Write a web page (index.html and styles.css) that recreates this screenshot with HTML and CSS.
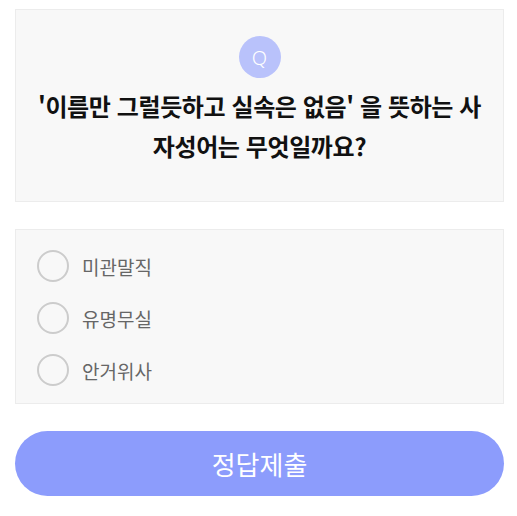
FILE: index.html
```html
<!DOCTYPE html>
<html lang="ko">
<head>
<meta charset="utf-8">
<link rel="stylesheet" href="styles.css">
</head>
<body>
<main class="quiz">
  <section class="question">
    <div class="q-badge">Q</div>
    <h1 class="q-text">'이름만 그럴듯하고 실속은 없음' 을 뜻하는 사<br>자성어는 무엇일까요?</h1>
  </section>
  <section class="options">
    <label class="option"><span class="radio"></span><span class="opt-text">미관말직</span></label>
    <label class="option"><span class="radio"></span><span class="opt-text">유명무실</span></label>
    <label class="option"><span class="radio"></span><span class="opt-text">안거위사</span></label>
  </section>
  <button class="submit">정답제출</button>
</main>
</body>
</html>
```

FILE: styles.css
```css
* { box-sizing: border-box; }
html, body { margin: 0; padding: 0; background: #fff; }
body {
  font-family: "Noto Sans CJK KR", "Noto Sans", sans-serif;
}
.quiz {
  width: 489px;
  margin: 9px 0 0 15px;
  display: flex;
  flex-direction: column;
}
.question {
  background: #f8f8f8;
  border: 1px solid #ececec;
  height: 193px;
  padding: 26px 5px 0;
  display: flex;
  flex-direction: column;
  align-items: center;
}
.q-badge {
  width: 42px;
  height: 42px;
  border-radius: 50%;
  background: #b9c2fb;
  color: #fff;
  font-family: "Noto Sans", sans-serif;
  font-size: 20px;
  font-weight: 300;
  display: flex;
  align-items: center;
  justify-content: center;
}
.q-text {
  margin: 8px 0 0;
  font-size: 24px;
  font-weight: 700;
  line-height: 40px;
  color: #111;
  text-align: center;
  letter-spacing: -0.4px;
}
.options {
  margin-top: 27px;
  background: #f8f8f8;
  border: 1px solid #ececec;
  height: 175px;
  padding: 20px 20px 0;
  display: flex;
  flex-direction: column;
  gap: 20px;
}
.option {
  display: flex;
  align-items: center;
  height: 32px;
}
.radio {
  width: 32px;
  height: 32px;
  border-radius: 50%;
  border: 2px solid #cccccc;
  margin-left: 1px;
  flex: none;
}
.opt-text {
  margin-left: 13px;
  font-size: 19px;
  color: #666;
}
.submit {
  margin-top: 27px;
  height: 65px;
  border: none;
  border-radius: 33px;
  background: #8c9cfc;
  color: #fff;
  font-family: "Noto Sans CJK KR", sans-serif;
  font-size: 26px;
  font-weight: 400;
}
```
